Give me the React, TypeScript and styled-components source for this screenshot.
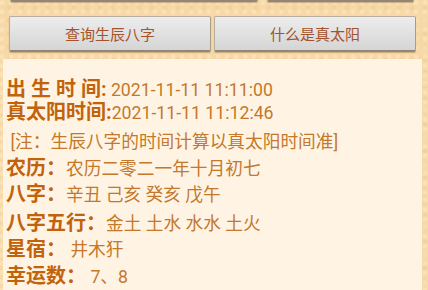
import React from "react";
import styled, { createGlobalStyle } from "styled-components";

const Global = createGlobalStyle`
  html, body { margin: 0; padding: 0; }
  body {
    width: 428px;
    height: 290px;
    overflow: hidden;
    background-color: #f7d8a7;
    background-image:
      radial-gradient(circle at 20% 30%, rgba(255,240,210,0.35) 0 2px, transparent 3px),
      radial-gradient(circle at 70% 60%, rgba(220,180,120,0.18) 0 2px, transparent 3px);
    background-size: 9px 9px, 13px 13px;
    font-family: Roboto, "Noto Sans CJK SC", sans-serif;
  }
`;

const Page = styled.div`
  display: flex;
  flex-direction: column;
  padding: 0 6px 0 3px;
`;

const TopRow = styled.div`
  display: flex;
  gap: 9px;
  margin-top: -34px;
  padding: 0 8px 0 7px;
`;

const ButtonRow = styled.div`
  display: flex;
  gap: 3px;
  margin-top: 14px;
  padding: 0 6px 0 6px;
`;

const Button = styled.button<{ $grow?: number }>`
  flex: ${(p) => p.$grow ?? 1} 1 0;
  height: 36px;
  box-sizing: border-box;
  margin: 0;
  padding: 0;
  border: 1px solid #b8afa3;
  border-bottom: 2px solid #938677;
  border-right-color: #a89c8e;
  border-radius: 2px;
  background: linear-gradient(#ededed, #d5d5d5);
  box-shadow: 0 1px 1px rgba(120, 90, 50, 0.35);
  color: #a4532b;
  font-family: "Noto Sans CJK SC", sans-serif;
  font-size: 15px;
  line-height: 34px;
  text-align: center;
`;

const Panel = styled.div`
  margin-top: 7px;
  background: #fff4e3;
  padding: 19px 0 0 3px;
  height: 231px;
  box-sizing: border-box;
  overflow: hidden;
`;

const Row = styled.div<{ $mt?: number }>`
  margin-top: ${(p) => p.$mt ?? 0}px;
  height: 23px;
  line-height: 23px;
  white-space: nowrap;
`;

const Label = styled.span`
  font-weight: bold;
  font-size: 20px;
  color: #c2630c;
`;

const Value = styled.span`
  font-size: 17.7px;
  color: #c4782c;
`;

export default function App() {
  return (
    <>
      <Global />
      <Page>
        <TopRow>
          <Button $grow={249} aria-hidden />
          <Button $grow={146} aria-hidden />
        </TopRow>
        <ButtonRow>
          <Button>查询生辰八字</Button>
          <Button>什么是真太阳</Button>
        </ButtonRow>
        <Panel>
          <Row>
            <Label>出 生 时 间:</Label>
            <Value> 2021-11-11 11:11:00</Value>
          </Row>
          <Row>
            <Label>真太阳时间:</Label>
            <Value>2021-11-11 11:12:46</Value>
          </Row>
          <Row $mt={7}>
            <Value>&nbsp;[注：生辰八字的时间计算以真太阳时间准]</Value>
          </Row>
          <Row $mt={3}>
            <Label>农历：</Label>
            <Value>农历二零二一年十月初七</Value>
          </Row>
          <Row $mt={3}>
            <Label>八字：</Label>
            <Value>辛丑 己亥 癸亥 戊午</Value>
          </Row>
          <Row $mt={6}>
            <Label>八字五行：</Label>
            <Value>金土 土水 水水 土火</Value>
          </Row>
          <Row $mt={3}>
            <Label>星宿：</Label>
            <Value> 井木犴</Value>
          </Row>
          <Row $mt={4}>
            <Label>幸运数：</Label>
            <Value> 7、8</Value>
          </Row>
        </Panel>
      </Page>
    </>
  );
}
